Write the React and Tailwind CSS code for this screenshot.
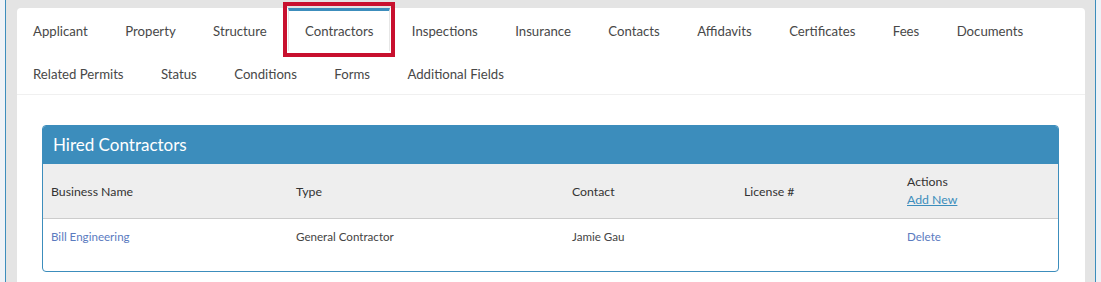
import React from 'react';

const tabsRow = [
  'Applicant', 'Property', 'Structure', 'Contractors', 'Inspections', 'Insurance',
  'Contacts', 'Affidavits', 'Certificates', 'Fees', 'Documents',
  'Related Permits', 'Status', 'Conditions', 'Forms', 'Additional Fields',
];

const contractors = [
  { name: 'Bill Engineering', type: 'General Contractor', contact: 'Jamie Gau', license: '' },
];

export default function App() {
  const font = { fontFamily: 'Lato, "Liberation Sans", sans-serif' };

  return (
    <div className="min-h-screen bg-[#eef2f7] px-[5px]" style={font}>
      <div className="min-h-[282px] border-x border-[#3c8dbc] bg-[#e4e4e4] pl-[11px] pr-[10px] pt-[8px]">
        <div className="min-h-[274px] rounded-t-[4px] bg-white">
          {/* tabs */}
          <ul className="flex flex-wrap gap-x-[5.4px] border-b border-[#f0f0f0]">
            {tabsRow.map((t) => {
              const active = t === 'Contractors';
              return (
                <li key={t} className="relative">
                  <div
                    className={`flex h-[43px] items-center border-t-[3px] px-4 pt-[2px] text-[13.2px] text-[#484848] ${
                      active ? 'border-x border-t-[#3c8dbc] border-x-[#e6e6e6]' : 'border-t-transparent'
                    }`}
                  >
                    {t}
                  </div>
                  {active && (
                    <div className="pointer-events-none absolute -top-[6px] -left-[5px] -right-[5px] h-[55px] border-[4px] border-[#c8102e]" />
                  )}
                </li>
              );
            })}
          </ul>

          {/* content */}
          <div className="pb-[10px] pl-[25px] pr-[26px] pt-[30px]">
            <div className="overflow-hidden rounded-[4px] border border-[#3c8dbc]">
              <div className="flex h-[38px] items-center bg-[#3c8dbc] px-[10px] text-[17px] text-white">
                Hired Contractors
              </div>
              <div className="grid h-[55px] grid-cols-[245px_276px_172px_163px_1fr] items-center border-b border-[#cccccc] bg-[#eeeeee] text-[12.3px] text-[#333]">
                <div className="px-2 pt-[3px]">Business Name</div>
                <div className="px-2 pt-[3px]">Type</div>
                <div className="px-2 pt-[3px]">Contact</div>
                <div className="px-2 pt-[3px]">License #</div>
                <div className="flex flex-col px-2 leading-[18px]">
                  <span>Actions</span>
                  <a className="cursor-pointer text-[#3c8dbc] underline">Add New</a>
                </div>
              </div>
              {contractors.map((c) => (
                <div
                  key={c.name}
                  className="grid h-[52px] grid-cols-[245px_276px_172px_163px_1fr] pt-[9px] text-[11.6px] leading-[18px] text-[#444]"
                >
                  <a className="cursor-pointer px-2 text-[#5b7bbf]">{c.name}</a>
                  <div className="px-2">{c.type}</div>
                  <div className="px-2">{c.contact}</div>
                  <div className="px-2">{c.license}</div>
                  <a className="cursor-pointer px-2 text-[#5b7bbf]">Delete</a>
                </div>
              ))}
            </div>
          </div>
        </div>
      </div>
    </div>
  );
}
